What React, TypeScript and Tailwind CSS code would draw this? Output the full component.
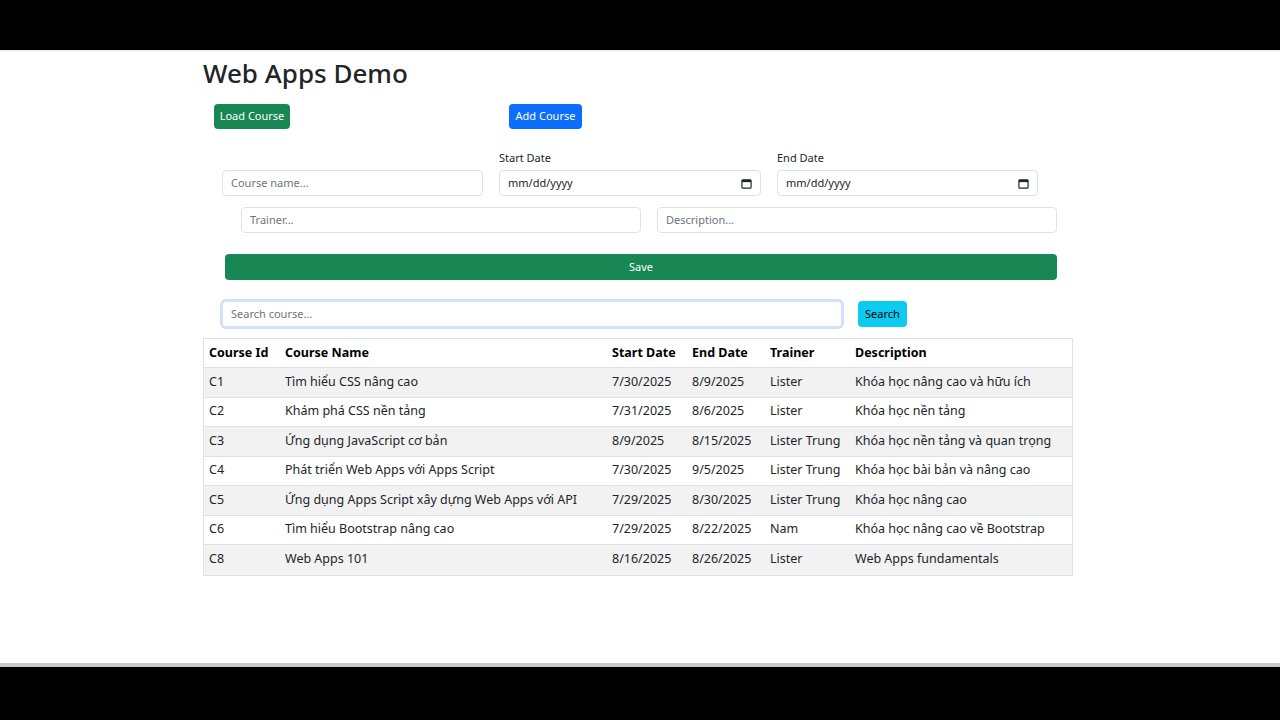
export default function App() {
  const rows = [
    ["C1", "Tìm hiểu CSS nâng cao", "7/30/2025", "8/9/2025", "Lister", "Khóa học nâng cao và hữu ích"],
    ["C2", "Khám phá CSS nền tảng", "7/31/2025", "8/6/2025", "Lister", "Khóa học nền tảng"],
    ["C3", "Ứng dụng JavaScript cơ bản", "8/9/2025", "8/15/2025", "Lister Trung", "Khóa học nền tảng và quan trọng"],
    ["C4", "Phát triển Web Apps với Apps Script", "7/30/2025", "9/5/2025", "Lister Trung", "Khóa học bài bản và nâng cao"],
    ["C5", "Ứng dụng Apps Script xây dựng Web Apps với API", "7/29/2025", "8/30/2025", "Lister Trung", "Khóa học nâng cao"],
    ["C6", "Tìm hiểu Bootstrap nâng cao", "7/29/2025", "8/22/2025", "Nam", "Khóa học nâng cao về Bootstrap"],
    ["C8", "Web Apps 101", "8/16/2025", "8/26/2025", "Lister", "Web Apps fundamentals"],
  ];
  const widths = ["w-[76px]", "w-[327px]", "w-[80px]", "w-[78px]", "w-[85px]", "flex-1"];
  const heads = ["Course Id", "Course Name", "Start Date", "End Date", "Trainer", "Description"];
  const input = "h-[26px] border border-[#dee2e6] rounded-[4px] px-2 text-[11px] text-[#6c757d] flex items-center bg-white";
  const DateInput = ({ w }: { w: string }) => (
    <div className={`${input} ${w} justify-between text-[#212529]`}>
      <span>mm/dd/yyyy</span>
      <svg width="11" height="11" viewBox="0 0 12 12"><rect x="1" y="2" width="10" height="9" rx="1" fill="none" stroke="#212529" strokeWidth="1.3"/><rect x="1" y="2" width="10" height="2.5" fill="#212529"/></svg>
    </div>
  );
  return (
    <div className="w-[1280px] h-[720px] bg-black flex flex-col" style={{ fontFamily: '"Noto Sans", "Open Sans", sans-serif' }}>
      <div className="h-[50px]" />
      <div className="h-[617px] bg-white border-t border-[#e5e5e5] border-b-4 border-b-[#c8c8cc]">
        <div className="w-[870px] ml-[203px] text-[#212529]">
          <h1 className="text-[26px] font-medium leading-[32px] mt-[6px]">Web Apps Demo</h1>
          <div className="flex mt-[15px] ml-[11px]">
            <div className="w-[76px] h-[25px] bg-[#198754] rounded-[4px] text-white text-[11px] flex items-center justify-center">Load Course</div>
            <div className="w-[73px] h-[25px] bg-[#0d6efd] rounded-[4px] text-white text-[11px] flex items-center justify-center ml-[219px]">Add Course</div>
          </div>
          <div className="flex ml-[19px] mt-[22px] gap-[16px]">
            <div className="flex flex-col w-[261px]"><div className="h-[19px]" /><div className={input}>Course name...</div></div>
            <div className="flex flex-col w-[262px]"><div className="h-[19px] text-[11px] leading-[14px]">Start Date</div><DateInput w="w-full" /></div>
            <div className="flex flex-col w-[261px]"><div className="h-[19px] text-[11px] leading-[14px]">End Date</div><DateInput w="w-full" /></div>
          </div>
          <div className="flex ml-[38px] mt-[11px] gap-[16px]">
            <div className={`${input} w-[400px]`}>Trainer...</div>
            <div className={`${input} w-[400px]`}>Description...</div>
          </div>
          <div className="ml-[22px] mt-[21px] w-[832px] h-[26px] bg-[#198754] rounded-[4px] text-white text-[11px] flex items-center justify-center">Save</div>
          <div className="flex ml-[19px] mt-[21px] gap-[16px]">
            <div className={`${input} w-[620px] border-[#86b7fe] shadow-[0_0_0_2px_rgba(13,110,253,0.2)]`}>Search course...</div>
            <div className="w-[49px] h-[26px] bg-[#0dcaf0] rounded-[4px] text-[11px] flex items-center justify-center text-black">Search</div>
          </div>
          <div className="mt-[11px] border border-[#dee2e6] text-[12.5px]">
            <div className="flex h-[29px] items-center font-bold px-[5px] text-black border-b border-[#dee2e6]">
              {heads.map((h, i) => <div key={i} className={widths[i]}>{h}</div>)}
            </div>
            {rows.map((r, ri) => (
              <div key={ri} className={`flex h-[29.5px] items-center px-[5px] text-[#212529] border-b border-[#dee2e6] last:border-b-0 ${ri % 2 === 0 ? "bg-[#f2f2f2]" : "bg-white"}`}>
                {r.map((c, i) => <div key={i} className={widths[i]}>{c}</div>)}
              </div>
            ))}
          </div>
        </div>
      </div>
    </div>
  );
}
